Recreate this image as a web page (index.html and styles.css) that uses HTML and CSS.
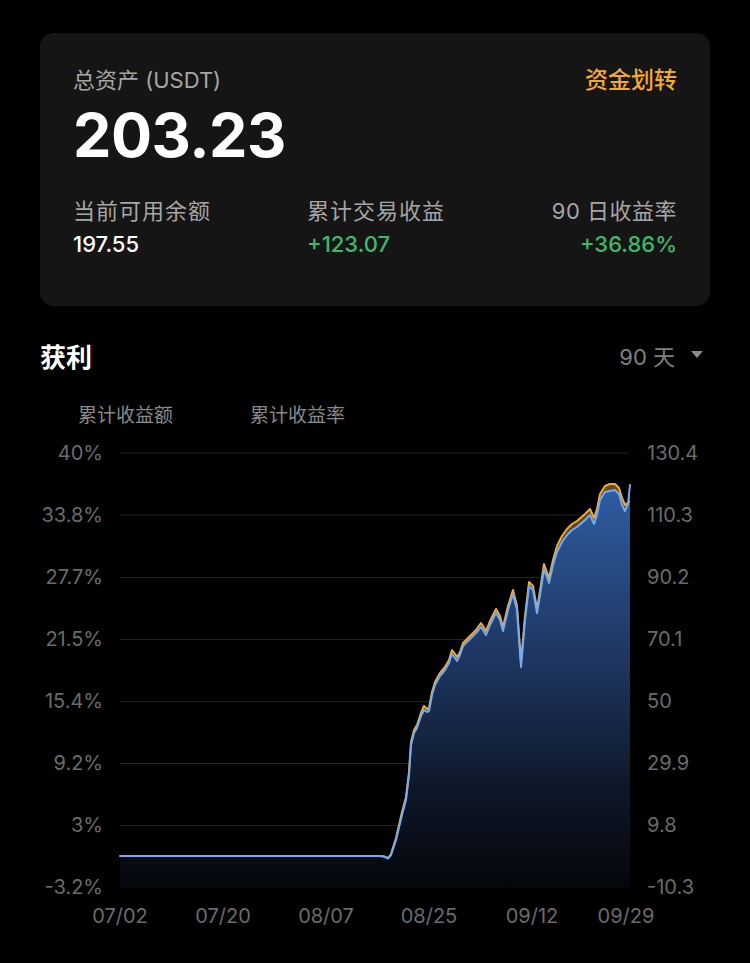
FILE: index.html
```html
<!DOCTYPE html>
<html lang="zh-CN">
<head>
    <meta charset="UTF-8">
    <meta name="viewport" content="width=device-width, initial-scale=1.0">
    <title>资产</title>
    <link rel="stylesheet" href="styles.css">
</head>
<body>
    <div class="page">
        <!-- assets card -->
        <div class="card">
            <div class="card-head">
                <div class="card-label">总资产 (USDT)</div>
                <div class="transfer">资金划转</div>
            </div>
            <div class="total">203.23</div>
            <div class="stats">
                <div class="stat">
                    <div class="stat-label">当前可用余额</div>
                    <div class="stat-value">197.55</div>
                </div>
                <div class="stat">
                    <div class="stat-label">累计交易收益</div>
                    <div class="stat-value green">+123.07</div>
                </div>
                <div class="stat right">
                    <div class="stat-label">90 日收益率</div>
                    <div class="stat-value green">+36.86%</div>
                </div>
            </div>
        </div>

        <!-- profit chart -->
        <div class="chart-head">
            <div class="chart-title">获利</div>
            <div class="range">90 天
                <svg class="caret" width="12" height="8" viewBox="0 0 12 8"><path d="M0 0 L12 0 L6 7 Z" fill="#8c8c8c"/></svg>
            </div>
        </div>
        <div class="legend">
            <span class="legend-item">累计收益额</span>
            <span class="legend-item">累计收益率</span>
        </div>

        <svg class="chart" width="750" height="500" viewBox="0 440 750 500">
            <defs>
                <linearGradient id="blueFill" gradientUnits="userSpaceOnUse" x1="0" y1="485" x2="0" y2="888">
                    <stop offset="0" stop-color="#2f5da3"/>
                    <stop offset="0.5" stop-color="#1b3055"/>
                    <stop offset="0.75" stop-color="#0e1729"/>
                    <stop offset="1" stop-color="#04060b"/>
                </linearGradient>
                <linearGradient id="orangeFill" gradientUnits="userSpaceOnUse" x1="0" y1="485" x2="0" y2="888">
                    <stop offset="0" stop-color="#6e4c1c"/>
                    <stop offset="1" stop-color="#1a140a"/>
                </linearGradient>
            </defs>

            <g class="grid">
                <line x1="120" y1="453" x2="628" y2="453"/>
                <line x1="120" y1="515" x2="628" y2="515"/>
                <line x1="120" y1="577.5" x2="628" y2="577.5"/>
                <line x1="120" y1="639.5" x2="628" y2="639.5"/>
                <line x1="120" y1="701.5" x2="628" y2="701.5"/>
                <line x1="120" y1="763.5" x2="628" y2="763.5"/>
                <line x1="120" y1="825.5" x2="628" y2="825.5"/>
                <line x1="120" y1="887.5" x2="628" y2="887.5"/>
            </g>

            <g class="axis-left">
                <text x="103" y="460">40%</text>
                <text x="103" y="522">33.8%</text>
                <text x="103" y="584">27.7%</text>
                <text x="103" y="646">21.5%</text>
                <text x="103" y="708">15.4%</text>
                <text x="103" y="770">9.2%</text>
                <text x="103" y="832">3%</text>
                <text x="103" y="894">-3.2%</text>
            </g>
            <g class="axis-right">
                <text x="647" y="460">130.4</text>
                <text x="647" y="522">110.3</text>
                <text x="647" y="584">90.2</text>
                <text x="647" y="646">70.1</text>
                <text x="647" y="708">50</text>
                <text x="647" y="770">29.9</text>
                <text x="647" y="832">9.8</text>
                <text x="647" y="894">-10.3</text>
            </g>
            <g class="axis-bottom">
                <text x="120" y="923">07/02</text>
                <text x="223" y="923">07/20</text>
                <text x="326" y="923">08/07</text>
                <text x="429" y="923">08/25</text>
                <text x="532" y="923">09/12</text>
                <text x="626" y="923">09/29</text>
            </g>

            <!-- cumulative amount (orange) -->
            <path fill="url(#orangeFill)" d="M120,856 L380,856 L384,856.5 L388,858 L391,854 L396,838 L402,812 L406,797 L409,772 L411,742 L414,730 L417,725 L421,713 L424,706 L427,709 L429,708 L432,692 L435,682 L440,673 L445,667 L449,660 L452,650 L455,654 L457,657 L460,652 L463,643 L470,636 L476,630 L481,623 L486,631 L490,621 L496,609 L500,616 L503,627 L508,606 L513,590 L517,606 L521,662 L525,616 L529,582 L533,586 L537,609 L540,591 L544,564 L549,578 L553,560 L557,546 L562,536 L567,529 L572,524 L577,521 L585,514 L590,509 L594,518 L597,509 L600,494 L605,486 L610,484 L615,484 L619,488 L622,498 L625,505 L630,502 L630,888 L120,888 Z"/>
            <!-- cumulative rate (blue) -->
            <path fill="url(#blueFill)" d="M120,856 L380,856 L384,856.5 L388,858.5 L391,855 L396,840 L402,815 L406,800 L409,775 L411,745 L414,733 L417,728 L421,716 L424,710 L427,712 L429,711 L432,695 L435,685 L440,676 L445,670 L449,663 L452,654 L455,658 L457,661 L460,655 L463,646 L470,639 L476,633 L481,627 L486,635 L490,625 L496,613 L500,620 L503,631 L508,610 L513,594 L517,610 L521,667 L525,620 L529,586 L533,590 L537,613 L540,595 L544,569 L549,583 L553,565 L557,552 L562,542 L567,535 L572,530 L577,527 L585,520 L590,515 L594,524 L597,515 L600,500 L605,492 L610,491 L615,490 L619,494 L622,505 L625,511 L628,504 L630,485 L630,888 L120,888 Z"/>

            <polyline class="line-orange" points="380,856 384,856.5 388,858 391,854 396,838 402,812 406,797 409,772 411,742 414,730 417,725 421,713 424,706 427,709 429,708 432,692 435,682 440,673 445,667 449,660 452,650 455,654 457,657 460,652 463,643 470,636 476,630 481,623 486,631 490,621 496,609 500,616 503,627 508,606 513,590 517,606 521,662 525,616 529,582 533,586 537,609 540,591 544,564 549,578 553,560 557,546 562,536 567,529 572,524 577,521 585,514 590,509 594,518 597,509 600,494 605,486 610,484 615,484 619,488 622,498 625,505 629,502"/>
            <polyline class="line-blue" points="120,856 380,856 384,856.5 388,858.5 391,855 396,840 402,815 406,800 409,775 411,745 414,733 417,728 421,716 424,710 427,712 429,711 432,695 435,685 440,676 445,670 449,663 452,654 455,658 457,661 460,655 463,646 470,639 476,633 481,627 486,635 490,625 496,613 500,620 503,631 508,610 513,594 517,610 521,667 525,620 529,586 533,590 537,613 540,595 544,569 549,583 553,565 557,552 562,542 567,535 572,530 577,527 585,520 590,515 594,524 597,515 600,500 605,492 610,491 615,490 619,494 622,505 625,511 628,504 630,485"/>
        </svg>
    </div>
</body>
</html>
```

FILE: styles.css
```css
body {
    margin: 0;
    background-color: #000;
    color: #fff;
    font-family: Inter, "Noto Sans CJK SC", sans-serif;
}
.page {
    width: 750px;
    padding-top: 33px;
}
.card {
    margin: 0 40px;
    height: 273px;
    box-sizing: border-box;
    padding: 35px 33px 0;
    background: #151515;
    border-radius: 14px;
}
.card-head {
    display: flex;
    justify-content: space-between;
    align-items: center;
}
.card-label {
    font-size: 22px;
    line-height: 24px;
    color: #a6a6a6;
}
.transfer {
    font-size: 23px;
    line-height: 24px;
    font-weight: 500;
    color: #f2aa33;
}
.total {
    margin-top: 8px;
    font-size: 61px;
    line-height: 70px;
    font-weight: 700;
    letter-spacing: -0.5px;
}
.stats {
    display: grid;
    grid-template-columns: 234px 1fr auto;
    margin-top: 29px;
}
.stat.right {
    text-align: right;
}
.stat-label {
    font-size: 22px;
    line-height: 24px;
    letter-spacing: 1px;
    color: #a6a6a6;
}
.stat.right .stat-label {
    letter-spacing: 0.5px;
}
.stat-value {
    margin-top: 9px;
    font-size: 22px;
    line-height: 24px;
    font-weight: 500;
}
.green {
    color: #3fb86b;
}
.chart-head {
    display: flex;
    justify-content: space-between;
    align-items: center;
    margin-top: 34px;
    padding: 0 47px 0 40px;
    height: 30px;
}
.chart-title {
    font-size: 26px;
    font-weight: 700;
}
.range {
    display: flex;
    align-items: center;
    font-size: 22px;
    color: #808080;
}
.caret {
    margin-left: 16px;
}
.legend {
    display: flex;
    gap: 77px;
    margin-top: 36px;
    padding-left: 78px;
    height: 20px;
    font-size: 19px;
    line-height: 20px;
    color: #8a8a8a;
}
.chart {
    display: block;
    margin-top: 14px;
}
.grid line {
    stroke: #232323;
    stroke-width: 1;
}
.chart text {
    font-family: Inter, sans-serif;
    font-size: 20px;
    fill: #6b6b6b;
}
.axis-left text {
    text-anchor: end;
}
.axis-bottom text {
    text-anchor: middle;
}
.line-orange, .line-blue {
    fill: none;
    stroke-width: 2;
    stroke-linejoin: round;
    stroke-linecap: round;
}
.line-orange {
    stroke: #eeaa3c;
}
.line-blue {
    stroke: #74aaf2;
}
```
